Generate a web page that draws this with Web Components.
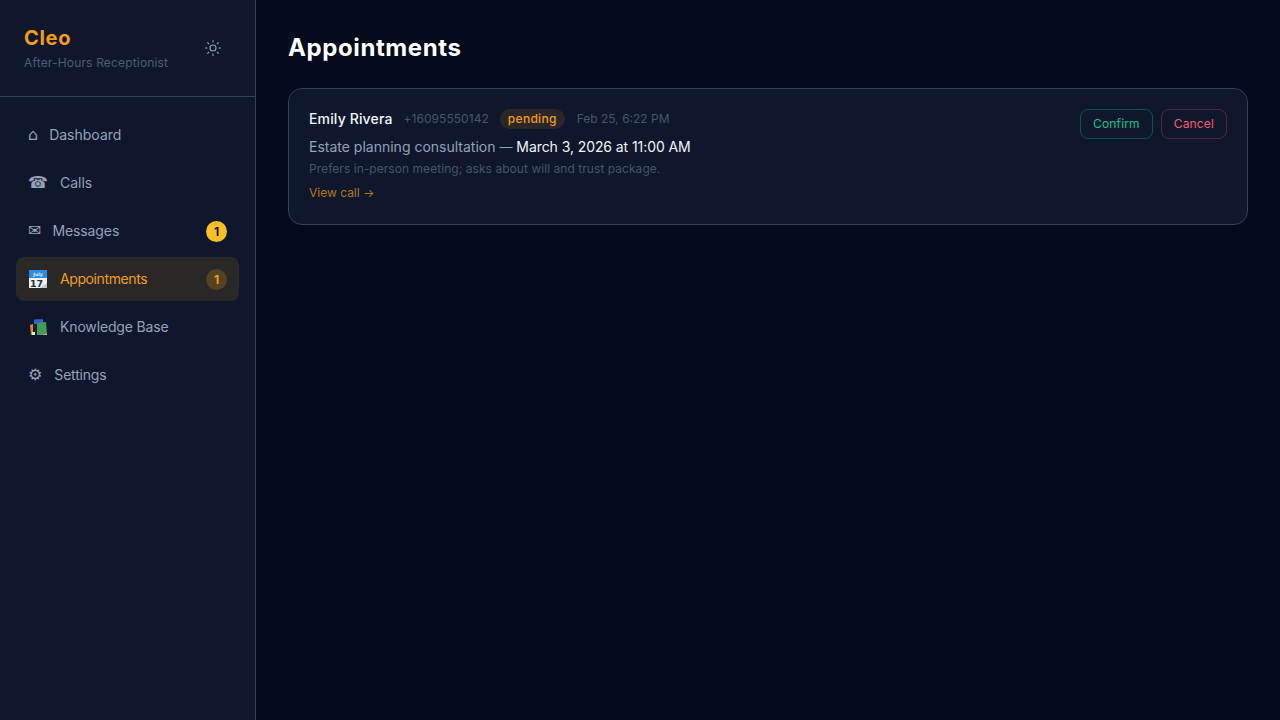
<!DOCTYPE html>
<html>
<head>
<meta charset="utf-8">
<title>Appointments</title>
<style>
html, body { margin: 0; height: 100%; }
body { background: #040c1c; color: #f1f5f9; font-family: Inter, "Noto Sans", sans-serif; }
</style>
</head>
<body>
<app-shell>
    <side-bar slot="side">
        <nav-item label="Dashboard" style="--gap:11px">⌂</nav-item>
        <nav-item label="Calls">☎</nav-item>
        <nav-item label="Messages" badge="1" style="--gap:11px;--ls:-.1px">✉</nav-item>
        <nav-item label="Appointments" badge="1" active style="--ls:-.4px">
            <svg width="20" height="18" viewBox="-1 0 20 18">
                <rect y="1" width="18" height="17" fill="#f0f1f2"/>
                <path d="M11 18l7-5v5z" fill="#c4c7cb"/>
                <rect y="0" width="18" height="8" fill="#2a8be6"/>
                <text x="9" y="5.5" font-size="4.5" font-weight="700" text-anchor="middle" fill="#e8f2fc">July</text>
                <text x="1" y="16.5" font-size="9.5" font-weight="600" fill="#2b2f36">17</text>
            </svg>
        </nav-item>
        <nav-item label="Knowledge Base" style="--ls:-.15px">
            <svg width="20" height="18" viewBox="-1 0 20 18">
                <path d="M5 1.5l9-.5v6H5z" fill="#2f62d0"/>
                <rect x="4" y="6" width="5" height="11" fill="#1a2030"/>
                <path d="M1 7l3-1v11H2z" fill="#e2831c"/>
                <rect x="3" y="14" width="3" height="3" fill="#e6e3dc"/>
                <path d="M8 5l9-1 1 12-10 1z" fill="#3f9d4f"/>
                <path d="M8 17l10-1v1z" fill="#c9ccd0"/>
            </svg>
        </nav-item>
        <nav-item label="Settings" style="--ls:-.2px">⚙</nav-item>
    </side-bar>
    <h1 style="margin:0 0 24px;font-size:24px;line-height:32px;font-weight:700;color:#fff;letter-spacing:.6px">Appointments</h1>
    <appointment-card name="Emily Rivera" phone="+16095550142" status="pending" created="Feb 25, 6:22 PM"
        reason="Estate planning consultation" when="March 3, 2026 at 11:00 AM"
        note="Prefers in-person meeting; asks about will and trust package."></appointment-card>
</app-shell>

<script>
const shellTemplate = document.createElement('template');
shellTemplate.innerHTML = `<style>
:host { display: flex; height: 100vh; overflow: hidden; }
main { flex: 1; min-width: 0; padding: 32px; }
</style>
<slot name="side"></slot>
<main><slot></slot></main>
`;

class AppShell extends HTMLElement {
    constructor() {
        super();
        this.attachShadow({mode: 'open'}).appendChild(shellTemplate.content.cloneNode(true));
    }
}
customElements.define('app-shell', AppShell);

const sideTemplate = document.createElement('template');
sideTemplate.innerHTML = `<style>
:host { display: flex; flex-direction: column; flex: none; width: 255px; background: #0e172b; border-right: 1px solid #334155; }
header { display: flex; align-items: center; justify-content: space-between; height: 96px; padding: 0 24px; border-bottom: 1px solid #334155; }
.brand { font-size: 20px; line-height: 28px; font-weight: 700; color: #f59e0b; letter-spacing: .7px; margin-top: -2px; }
.sub { font-size: 12px; line-height: 16px; color: #4f5d72; margin-top: 3px; letter-spacing: .17px; }
button { all: unset; display: flex; width: 36px; height: 36px; align-items: center; justify-content: center; color: #94a3b8; }
nav { display: flex; flex-direction: column; gap: 4px; padding: 16px; }
</style>
<header>
    <div>
        <div class="brand">Cleo</div>
        <div class="sub">After-Hours Receptionist</div>
    </div>
    <button aria-label="Toggle theme">
        <svg width="18" height="18" viewBox="0 0 24 24" fill="none" stroke="currentColor" stroke-width="1.5" stroke-linecap="round" stroke-linejoin="round">
            <circle cx="12" cy="12" r="4"/>
            <path d="M12 2v2M12 20v2M4.93 4.93l1.41 1.41M17.66 17.66l1.41 1.41M2 12h2M20 12h2M6.34 17.66l-1.41 1.41M19.07 4.93l-1.41 1.41"/>
        </svg>
    </button>
</header>
<nav><slot></slot></nav>
`;

class SideBar extends HTMLElement {
    constructor() {
        super();
        this.attachShadow({mode: 'open'}).appendChild(sideTemplate.content.cloneNode(true));
    }
}
customElements.define('side-bar', SideBar);

const navTemplate = document.createElement('template');
navTemplate.innerHTML = `<style>
:host { display: flex; align-items: center; gap: var(--gap, 12px); height: 44px; padding: 0 12px; border-radius: 8px; font-size: 14px; color: #94a3b8; }
:host([active]) { background: #292827; color: #f59e0b; }
.icon { display: flex; align-items: center; font-size: 16px; line-height: 24px; font-family: "DejaVu Sans", sans-serif; }
.label { flex: 1; padding-bottom: 2px; letter-spacing: var(--ls, 0); }
.badge { display: none; width: 21px; height: 21px; border-radius: 50%; background: #fbbf24; color: #0f172a; font-size: 12px; font-weight: 700; align-items: center; justify-content: center; }
:host([badge]) .badge { display: flex; }
:host([active]) .badge { background: #544222; color: #f59e0b; }
</style>
<span class="icon"><slot></slot></span><span class="label"></span><span class="badge"></span>
`;

class NavItem extends HTMLElement {
    constructor() {
        super();
        this.attachShadow({mode: 'open'}).appendChild(navTemplate.content.cloneNode(true));
    }

    connectedCallback() {
        this.shadowRoot.querySelector('.label').textContent = this.getAttribute('label');
        this.shadowRoot.querySelector('.badge').textContent = this.getAttribute('badge');
    }
}
customElements.define('nav-item', NavItem);

const cardTemplate = document.createElement('template');
cardTemplate.innerHTML = `<style>
:host { display: flex; justify-content: space-between; align-items: flex-start; gap: 16px; padding: 20px 20px 23px; border: 1px solid #334155; border-radius: 14px; background: #0e172b; }
.top { display: flex; align-items: center; gap: 12px; height: 20px; margin-bottom: 8px; }
.name { font-size: 14px; font-weight: 500; color: #f1f5f9; letter-spacing: .15px; padding-bottom: 2px; }
.phone, .created { font-size: 12px; color: #475569; padding-bottom: 1px; }
.phone { margin: 0 -1px; letter-spacing: .05px; }
.status { font-size: 12px; font-weight: 500; line-height: 20px; padding: 0 8px; border-radius: 10px; color: #f59e0b; background: #292827; letter-spacing: .3px; }
.reason { font-size: 14px; line-height: 20px; color: #94a3b8; }
.reason i { font-style: normal; font-size: 13px; }
.reason b { font-weight: 400; color: #f1f5f9; letter-spacing: -.08px; }
.note { font-size: 12px; line-height: 16px; margin-top: 4px; color: #475569; letter-spacing: .05px; }
a { display: block; font-size: 12px; line-height: 16px; margin-top: 8px; color: #b9770e; text-decoration: none; }
.actions { display: flex; gap: 8px; }
button { all: unset; font-size: 12px; line-height: 16px; padding: 6px 12px; border-radius: 8px; border: 1px solid; letter-spacing: .15px; }
.ok { color: #10c48a; border-color: rgba(16, 185, 129, 0.35); }
.no { color: #f4606f; border-color: rgba(244, 63, 94, 0.3); }
</style>
<div>
    <div class="top">
        <span class="name"></span><span class="phone"></span><span class="status"></span><span class="created"></span>
    </div>
    <div class="reason"><span class="r"></span> <i>—</i> <b></b></div>
    <div class="note"></div>
    <a href="#">View call →</a>
</div>
<div class="actions"><button class="ok">Confirm</button><button class="no">Cancel</button></div>
`;

class AppointmentCard extends HTMLElement {
    constructor() {
        super();
        this.attachShadow({mode: 'open'}).appendChild(cardTemplate.content.cloneNode(true));
    }

    connectedCallback() {
        const root = this.shadowRoot;
        root.querySelector('.name').textContent = this.getAttribute('name');
        root.querySelector('.phone').textContent = this.getAttribute('phone');
        root.querySelector('.status').textContent = this.getAttribute('status');
        root.querySelector('.created').textContent = this.getAttribute('created');
        root.querySelector('.r').textContent = this.getAttribute('reason');
        root.querySelector('b').textContent = this.getAttribute('when');
        root.querySelector('.note').textContent = this.getAttribute('note');
    }
}
customElements.define('appointment-card', AppointmentCard);
</script>
</body>
</html>
